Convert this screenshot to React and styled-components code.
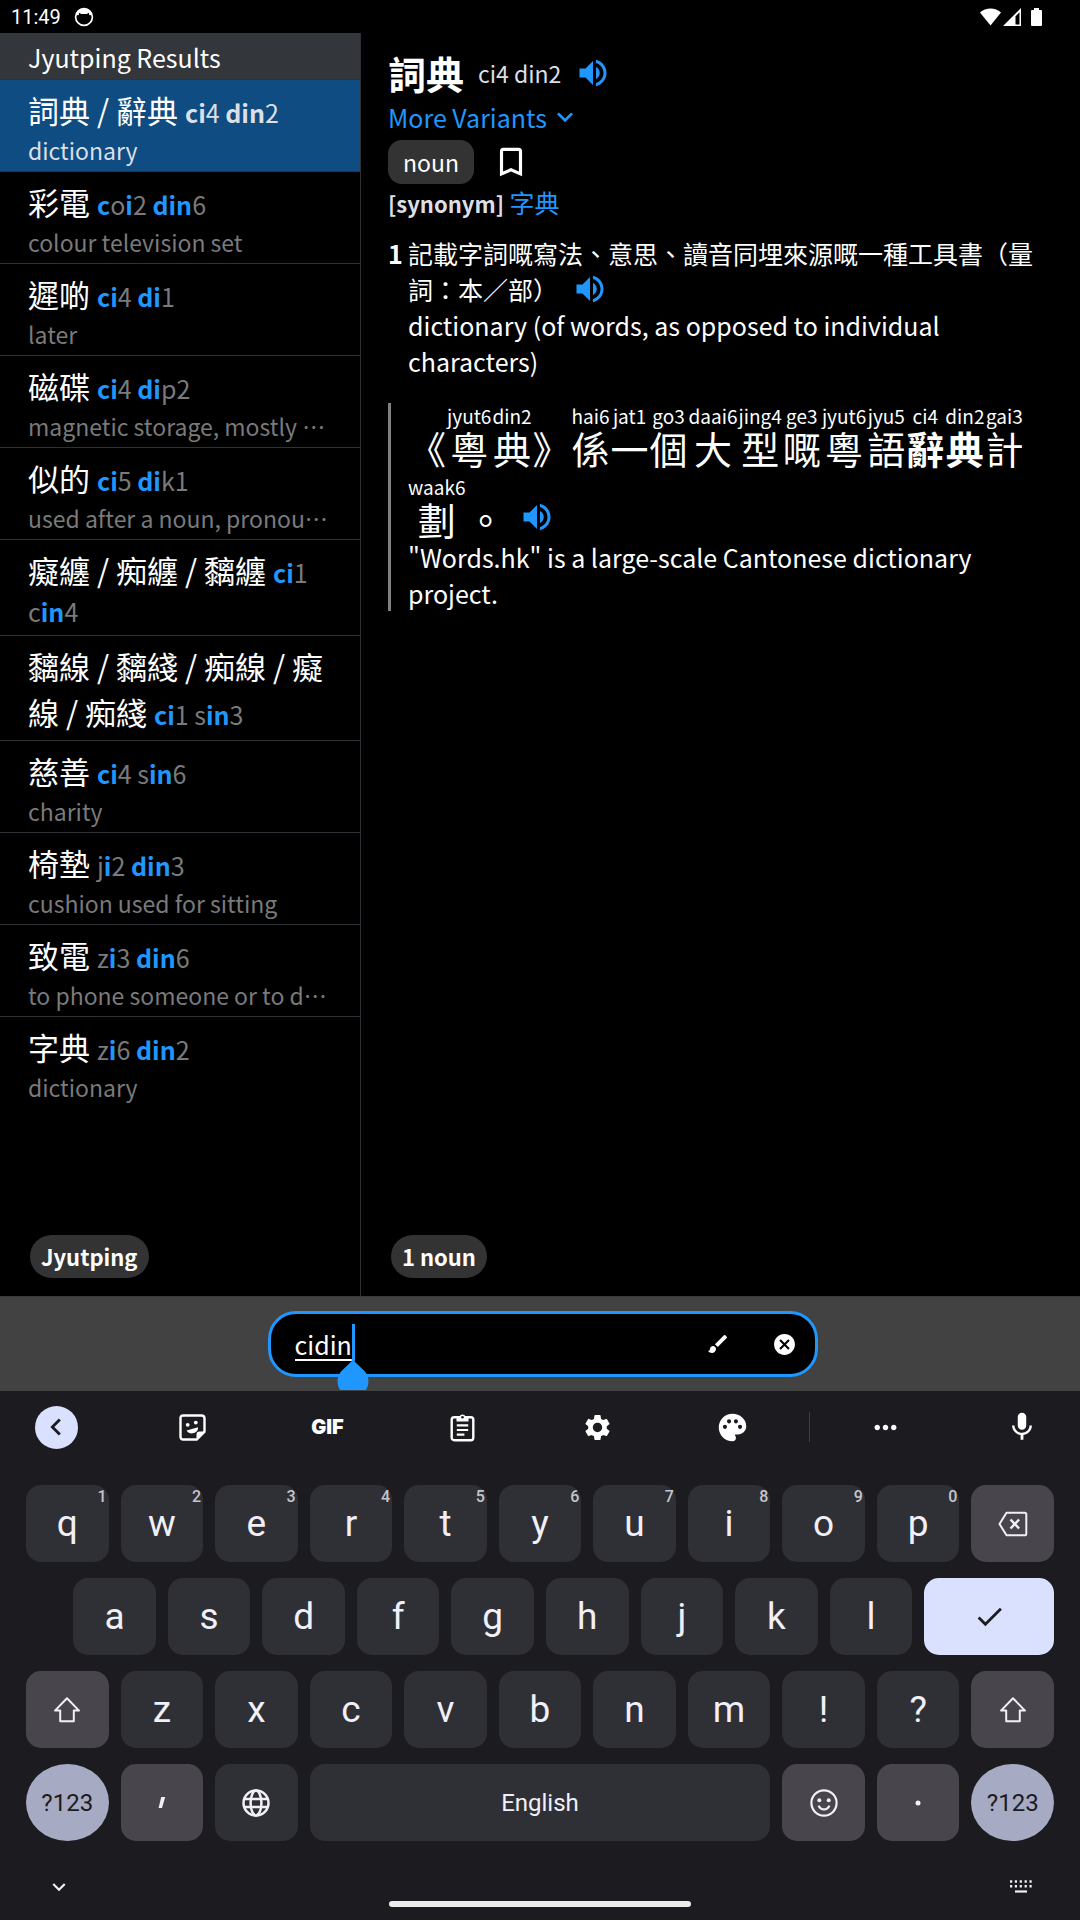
import React from "react";
import styled, { createGlobalStyle, css } from "styled-components";
import {
  MdVolumeUp,
  MdBookmarkBorder,
  MdBrush,
  MdCancel,
  MdSettings,
  MdPalette,
  MdMoreHoriz,
  MdMic,
  MdChevronLeft,
  MdExpandMore,
  MdCheck,
} from "react-icons/md";

const color = {
  accent: "#1f97ff",
  line: "#2f3237",
  muted: "#7a7a7a",
  soft: "#dcdfe5",
  chip: "#333333",
  board: "#1b1b20",
  key: "#2f3035",
  keyAlt: "#48464c",
  keySwitch: "#a6aac3",
  keyEnter: "#dae1ff",
  glyph: "#f1eff7",
};

const GlobalStyle = createGlobalStyle`
  *, *::before, *::after { box-sizing: border-box; }
  body {
    margin: 0;
    background: #000;
    color: #fff;
    font-family: "Noto Sans CJK TC", sans-serif;
    font-size: 25px;
    line-height: 36px;
  }
  button, input { font: inherit; color: inherit; margin: 0; padding: 0; border: 0; background: none; }
  button { cursor: pointer; }
  svg { display: block; flex: none; }
`;

const Screen = styled.div`
  min-height: 100vh;
  display: flex;
  flex-direction: column;
`;

/* ---------- status bar ---------- */

const StatusBar = styled.header`
  height: 33px;
  padding: 0 38px 0 11px;
  display: flex;
  align-items: center;
  justify-content: space-between;
  font-family: Roboto, sans-serif;
  font-size: 20px;
  line-height: 24px;
`;

const StatusGroup = styled.div`
  display: flex;
  align-items: center;
  gap: ${(p) => p.$gap}px;
`;

/* ---------- panes ---------- */

const Panes = styled.main`
  flex: 1;
  display: grid;
  grid-template-columns: minmax(0, 1fr) minmax(0, 2fr);
`;

const ResultsPane = styled.section`
  display: flex;
  flex-direction: column;
`;

const PaneHeading = styled.h2`
  margin: 0;
  padding: 7px 28px 4px;
  background: #33363b;
  border-bottom: 1px solid ${color.line};
  font-size: 25px;
  font-weight: 400;
  line-height: 35px;
`;

const ResultList = styled.ul`
  margin: 0;
  padding: 0;
  list-style: none;
`;

const ResultItem = styled.li`
  border-bottom: 1px solid ${color.line};
  &:last-child { border-bottom: 0; }
`;

const ResultButton = styled.button`
  display: block;
  width: 100%;
  padding: 7px 28px 5px;
  text-align: left;
  color: ${(p) => (p.$selected ? color.soft : color.muted)};
  background: ${(p) => (p.$selected ? "#0f4c81" : "transparent")};
  b {
    font-weight: 700;
    color: ${(p) => (p.$selected ? color.soft : color.accent)};
  }
`;

const ResultTitle = styled.span`
  display: block;
  font-size: 25px;
  line-height: 37px;
`;

const Hanzi = styled.span`
  color: #fff;
  font-size: 31px;
  line-height: 46px;
`;

const ResultGloss = styled.span`
  display: block;
  padding-top: 2px;
  font-size: 23px;
  line-height: 31px;
  white-space: nowrap;
  overflow: hidden;
  text-overflow: ellipsis;
`;

const PaneFooter = styled.footer`
  margin-top: auto;
  padding: 0 30px 18px;
  display: flex;
`;

const Pill = styled.button`
  height: 43px;
  padding: 0 11px;
  border-radius: 22px;
  background: ${color.chip};
  font-size: 22px;
  font-weight: 700;
  line-height: 33px;
`;

/* ---------- entry ---------- */

const EntryPane = styled.section`
  display: flex;
  flex-direction: column;
  border-left: 1px solid ${color.line};
`;

const Entry = styled.article`
  padding: 14px 27px 0;
`;

const EntryHead = styled.div`
  display: flex;
  align-items: center;
  height: 52px;
  gap: 14px;
`;

const Headword = styled.h1`
  margin: 0;
  font-size: 38px;
  font-weight: 700;
  line-height: 52px;
`;

const Reading = styled.span`
  color: ${color.soft};
  font-size: 23px;
  line-height: 33px;
`;

const SpeakButton = styled.button`
  display: inline-flex;
  vertical-align: top;
  color: ${color.accent};
  margin-left: ${(p) => (p.$inline ? "14px" : "0")};
`;

const VariantsButton = styled.button`
  display: flex;
  align-items: center;
  gap: 2px;
  color: ${color.accent};
`;

const TagRow = styled.div`
  display: flex;
  align-items: center;
  gap: 18px;
  margin-top: 5px;
`;

const Tag = styled.span`
  height: 44px;
  padding: 4px 15px;
  border-radius: 14px;
  background: ${color.chip};
  font-size: 23px;
`;

const IconButton = styled.button`
  display: flex;
  align-items: center;
  justify-content: center;
`;

const Synonyms = styled.p`
  margin: 0;
  color: ${color.soft};
  b { font-size: 22px; }
  a { color: ${color.accent}; text-decoration: none; }
`;

const Senses = styled.ol`
  margin: 14px 0 0;
  padding: 0;
  list-style: none;
`;

const Sense = styled.li`
  display: grid;
  grid-template-columns: 20px minmax(0, 1fr);
`;

const Paragraph = styled.p`
  margin: 0;
`;

const Example = styled.blockquote`
  margin: 24px 0 0;
  padding: 1px 0 0 17px;
  border-left: 3px solid #808080;
`;

const RubyLine = styled.div`
  display: flex;
  flex-wrap: wrap;
  gap: 7px 1px;
`;

const RubyCell = styled.span`
  display: grid;
  grid-template-rows: 24px 40px;
  justify-items: center;
  font-size: 38px;
  line-height: 40px;
  font-weight: ${(p) => (p.$strong ? 700 : 400)};
`;

const RubyText = styled.span`
  font-size: 19px;
  font-weight: 400;
  line-height: 24px;
`;

/* ---------- search ---------- */

const SearchBar = styled.form`
  display: flex;
  justify-content: center;
  padding: 14px 21px 14px 26px;
  background: #424242;
  border-top: 1px solid #383838;
`;

const SearchBox = styled.div`
  flex: 0 1 550px;
  height: 66px;
  padding: 0 18px 0 24px;
  display: flex;
  align-items: center;
  background: #000;
  border: 3px solid ${color.accent};
  border-radius: 28px;
`;

const SearchField = styled.label`
  position: relative;
  display: flex;
  margin-right: auto;
`;

const SearchInput = styled.input`
  field-sizing: content;
  outline: none;
  height: 36px;
  text-decoration: underline;
  text-decoration-thickness: 2px;
  text-underline-offset: 4px;
  text-decoration-skip-ink: none;
`;

const Caret = styled.span`
  position: absolute;
  left: 100%;
  top: -2px;
  width: 3px;
  height: 37px;
  background: ${color.accent};
`;

const CaretHandle = styled.span`
  position: absolute;
  left: calc(100% - 15px);
  top: 34px;
  width: 32px;
  height: 30px;
  overflow: hidden;
  color: ${color.accent};
`;

const SearchActions = styled.div`
  display: flex;
  gap: 42px;
`;

/* ---------- keyboard ---------- */

const Keyboard = styled.section`
  background: ${color.board};
  color: ${color.glyph};
  font-family: Roboto, sans-serif;
`;

const Toolbar = styled.div`
  display: grid;
  grid-template-columns: 125fr repeat(5, 135fr) 19fr 133fr 128fr;
  align-items: center;
  height: 72px;
  color: #fff;
`;

const ToolButton = styled.button`
  height: 44px;
  display: flex;
  align-items: center;
  justify-content: center;
  font-family: Inter, sans-serif;
  font-size: 20px;
  font-weight: 900;
  &:first-child { padding-right: 13px; }
  &:last-child { padding-left: 12px; }
`;

const BackDisc = styled.span`
  width: 43px;
  height: 43px;
  border-radius: 50%;
  display: grid;
  place-items: center;
  background: ${color.keyEnter};
  color: ${color.board};
`;

const ToolDivider = styled.span`
  justify-self: center;
  width: 1px;
  height: 30px;
  background: #3f3f44;
`;

const Keys = styled.div`
  display: grid;
  grid-template-columns: repeat(22, minmax(0, 1fr));
  grid-auto-rows: 77px;
  gap: 16px 12px;
  padding: 22px 26px 0;
`;

const keyTone = {
  plain: css`background: ${color.key};`,
  alt: css`background: ${color.keyAlt};`,
  enter: css`background: ${color.keyEnter}; color: ${color.board};`,
  mode: css`background: ${color.keySwitch}; color: ${color.board}; border-radius: 50%;`,
};

const Key = styled.button`
  position: relative;
  grid-column: ${(p) => (p.$start ? `${p.$start} / ` : "")}span ${(p) => p.$span || 2};
  display: flex;
  align-items: center;
  justify-content: center;
  border-radius: 15px;
  font-size: ${(p) => (p.$small ? 24 : 37)}px;
  line-height: 44px;
  ${(p) => keyTone[p.$tone || "plain"]}
`;

const KeyHint = styled.span`
  position: absolute;
  top: 3px;
  right: 2px;
  font-size: 16px;
  line-height: 18px;
  font-weight: 500;
  color: #c6c5cc;
`;

const NavBar = styled.nav`
  display: grid;
  grid-template-columns: 66px 1fr 66px;
  justify-items: center;
  align-items: center;
  height: 79px;
  padding: 12px 26px 0;
`;

const HomeHandle = styled.span`
  align-self: end;
  width: 302px;
  height: 6px;
  margin-bottom: 13px;
  border-radius: 3px;
  background: #ecece8;
`;

/* ---------- drawings ---------- */

const CatBadge = () => (
  <svg width="20" height="20" viewBox="0 0 20 20" aria-hidden="true">
    <circle cx="10" cy="10" r="8.4" fill="#000" stroke="#fff" strokeWidth="1.7" />
    <path d="M2 8C3 3.600 6 1.500 10 1.500S17 3.600 18 8L15.200 8.200 15 5.800 12.800 7H7.200L5 5.800 4.800 8.200Z" fill="#fff" />
  </svg>
);

const WifiIcon = () => (
  <svg width="21" height="18" viewBox="0 0 21 18" aria-hidden="true">
    <path d="M10.500 17.500 0 4.600C3 2 6.500.6 10.500.6S18 2 21 4.600Z" fill="#fff" />
  </svg>
);

const SignalIcon = () => (
  <svg width="18" height="18" viewBox="0 0 18 18" aria-hidden="true">
    <path d="M0 18 18 0v18ZM12.500 16.400h4V4.200l-4 4Z" fillRule="evenodd" fill="#fff" />
  </svg>
);

const BatteryIcon = () => (
  <svg width="11" height="18" viewBox="0 0 11 18" aria-hidden="true">
    <path d="M3 0h5v2h2q1 0 1 1v14q0 1-1 1H1q-1 0-1-1V3q0-1 1-1h2Z" fill="#fff" />
  </svg>
);

const StickerIcon = () => (
  <svg width="27" height="27" viewBox="0 0 27 27" aria-hidden="true">
    <path d="M4.500 1.500h18q3 0 3 3v13.200l-7.800 7.800H4.500q-3 0-3-3v-18q0-3 3-3Z" fill="none" stroke="currentColor" strokeWidth="2.400" />
    <path d="M17.500 25.500v-5q0-3 3-3h5Z" fill="currentColor" />
    <circle cx="8.700" cy="10.800" r="1.900" fill="currentColor" />
    <circle cx="16.800" cy="8.600" r="1.900" fill="currentColor" />
    <path d="M7.600 16.400 19 13.300c.3 3.200-1.900 5.500-5 6-2.800.4-5.300-.6-6.400-2.900Z" fill="currentColor" />
  </svg>
);

const ClipboardIcon = () => (
  <svg width="25" height="29" viewBox="0 0 25 29" aria-hidden="true">
    <rect x="1.700" y="4.200" width="21.600" height="23" rx="2.500" fill="none" stroke="currentColor" strokeWidth="2.400" />
    <path d="M6.500 3.500h3a3.200 3.200 0 0 1 6 0h3v5h-12Z" fill="currentColor" />
    <circle cx="12.500" cy="4.200" r="1.300" fill={color.board} />
    <path d="M6.800 12.400h11.400M6.800 17h11.400M6.800 21.600h7.600" stroke="currentColor" strokeWidth="2.200" />
  </svg>
);

const ShiftIcon = () => (
  <svg width="28" height="28" viewBox="0 0 28 28" aria-hidden="true">
    <path d="M14 2.300 26 14.600h-5.200v10.600H7.200V14.600H2Z" fill="none" stroke="currentColor" strokeWidth="2" strokeLinejoin="round" />
  </svg>
);

const BackspaceIcon = () => (
  <svg width="30" height="26" viewBox="0 0 30 26" aria-hidden="true">
    <path d="M8.500 1.700h18.200q1.600 0 1.600 1.600v19.400q0 1.600-1.600 1.600H8.500L1.500 13Z" fill="none" stroke="currentColor" strokeWidth="2" strokeLinejoin="round" />
    <path d="m12.500 8.500 8.600 9m0-9-8.600 9" stroke="currentColor" strokeWidth="2.400" />
  </svg>
);

const GlobeIcon = () => (
  <svg width="28" height="28" viewBox="0 0 28 28" aria-hidden="true">
    <g fill="none" stroke="currentColor" strokeWidth="2.500">
      <circle cx="14" cy="14" r="12.500" />
      <ellipse cx="14" cy="14" rx="5.400" ry="12.500" />
      <path d="M2.500 10h23M2.500 18h23" />
    </g>
  </svg>
);

const SmileIcon = () => (
  <svg width="28" height="28" viewBox="0 0 28 28" aria-hidden="true">
    <circle cx="14" cy="14" r="12.600" fill="none" stroke="currentColor" strokeWidth="2.200" />
    <circle cx="9.300" cy="11.300" r="2" fill="currentColor" />
    <circle cx="18.700" cy="11.300" r="2" fill="currentColor" />
    <path d="M8.600 16.600c1 2.500 3 3.800 5.400 3.800s4.400-1.300 5.400-3.800" fill="none" stroke="currentColor" strokeWidth="2.200" />
  </svg>
);

const CommaIcon = () => (
  <svg width="8" height="12" viewBox="0 0 8 12" aria-hidden="true">
    <path d="M3.200 0H7.200L4 11H.6Z" fill="currentColor" />
  </svg>
);

const DotIcon = () => (
  <svg width="6" height="6" viewBox="0 0 6 6" aria-hidden="true">
    <circle cx="3" cy="3" r="2.500" fill="currentColor" />
  </svg>
);

const KeyboardIcon = () => (
  <svg width="22" height="14" viewBox="0 0 22 14" aria-hidden="true">
    <path
      d="M0 1.500h2.200m2.600 0H7m2.700 0h2.200m2.700 0h2.200m2.700 0h2.200M0 6.300h2.200m2.600 0H7m2.700 0h2.200m2.700 0h2.200m2.700 0h2.200"
      stroke="currentColor"
      strokeWidth="2.400"
    />
    <path d="M5 11.500h12" stroke="currentColor" strokeWidth="2.200" />
  </svg>
);

/* ---------- data ---------- */

const results = [
  { hanzi: "詞典 / 辭典", reading: "*ci*4 *din*2", gloss: "dictionary", selected: true },
  { hanzi: "彩電", reading: "*c*o*i*2 *din*6", gloss: "colour television set" },
  { hanzi: "遲啲", reading: "*ci*4 *di*1", gloss: "later" },
  { hanzi: "磁碟", reading: "*ci*4 *di*p2", gloss: "magnetic storage, mostly used in computers" },
  { hanzi: "似的", reading: "*ci*5 *di*k1", gloss: "used after a noun, pronoun, or verb" },
  { hanzi: "癡纏 / 痴纏 / 黐纏", reading: "*ci*1 c*in*4" },
  { hanzi: "黐線 / 黐綫 / 痴線 / 癡線 / 痴綫", reading: "*ci*1 s*in*3" },
  { hanzi: "慈善", reading: "*ci*4 s*in*6", gloss: "charity" },
  { hanzi: "椅墊", reading: "j*i*2 *din*3", gloss: "cushion used for sitting" },
  { hanzi: "致電", reading: "z*i*3 *din*6", gloss: "to phone someone or to dial a number" },
  { hanzi: "字典", reading: "z*i*6 *din*2", gloss: "dictionary" },
];

const ruby = [
  ["《"], ["粵", "jyut6"], ["典", "din2"], ["》"], ["係", "hai6"], ["一", "jat1"], ["個", "go3"],
  ["大", "daai6"], ["型", "jing4"], ["嘅", "ge3"], ["粵", "jyut6"], ["語", "jyu5"],
  ["辭", "ci4", true], ["典", "din2", true], ["計", "gai3"], ["劃", "waak6"], ["。"],
];

const topRow = ["q", "w", "e", "r", "t", "y", "u", "i", "o", "p"];
const homeRow = ["a", "s", "d", "f", "g", "h", "j", "k", "l"];
const lowRow = ["z", "x", "c", "v", "b", "n", "m", "!", "?"];

const Matched = ({ text }) =>
  text.split("*").map((part, i) => (i % 2 ? <b key={i}>{part}</b> : part));

const Speaker = ({ label, inline }) => (
  <SpeakButton type="button" aria-label={label} $inline={inline}>
    <MdVolumeUp size={36} />
  </SpeakButton>
);

export default function App() {
  return (
    <Screen>
      <GlobalStyle />
      <StatusBar>
        <StatusGroup $gap={13}>
          <span>11:49</span>
          <CatBadge />
        </StatusGroup>
        <StatusGroup $gap={10}>
          <StatusGroup $gap={2}>
            <WifiIcon />
            <SignalIcon />
          </StatusGroup>
          <BatteryIcon />
        </StatusGroup>
      </StatusBar>

      <Panes lang="zh-Hant">
        <ResultsPane>
          <PaneHeading>Jyutping Results</PaneHeading>
          <ResultList>
            {results.map((r) => (
              <ResultItem key={r.hanzi}>
                <ResultButton type="button" $selected={r.selected}>
                  <ResultTitle>
                    <Hanzi>{r.hanzi} </Hanzi>
                    <Matched text={r.reading} />
                  </ResultTitle>
                  {r.gloss && <ResultGloss>{r.gloss}</ResultGloss>}
                </ResultButton>
              </ResultItem>
            ))}
          </ResultList>
          <PaneFooter>
            <Pill type="button">Jyutping</Pill>
          </PaneFooter>
        </ResultsPane>

        <EntryPane>
          <Entry>
            <EntryHead>
              <Headword>詞典</Headword>
              <Reading>ci4 din2</Reading>
              <Speaker label="Play pronunciation" />
            </EntryHead>
            <VariantsButton type="button">
              More Variants <MdExpandMore size={32} />
            </VariantsButton>
            <TagRow>
              <Tag>noun</Tag>
              <IconButton type="button" aria-label="Bookmark">
                <MdBookmarkBorder size={38} />
              </IconButton>
            </TagRow>
            <Synonyms>
              <b>[synonym]</b> <a href="#synonym">字典</a>
            </Synonyms>
            <Senses>
              <Sense>
                <b>1</b>
                <div>
                  <Paragraph>
                    記載字詞嘅寫法、意思、讀音同埋來源嘅一種工具書（量詞：本／部）
                    <Speaker inline label="Play definition" />
                  </Paragraph>
                  <Paragraph>dictionary (of words, as opposed to individual characters)</Paragraph>
                </div>
              </Sense>
            </Senses>
            <Example>
              <RubyLine>
                {ruby.map(([base, reading, strong], i) => (
                  <RubyCell key={i} $strong={strong}>
                    <RubyText>{reading}</RubyText>
                    {base}
                  </RubyCell>
                ))}
                <RubyCell>
                  <RubyText />
                  <Speaker inline label="Play example" />
                </RubyCell>
              </RubyLine>
              <Paragraph>"Words.hk" is a large-scale Cantonese dictionary project.</Paragraph>
            </Example>
          </Entry>
          <PaneFooter>
            <Pill type="button">1 noun</Pill>
          </PaneFooter>
        </EntryPane>
      </Panes>

      <SearchBar onSubmit={(e) => e.preventDefault()}>
        <SearchBox>
          <SearchField>
            <SearchInput type="text" aria-label="Search" defaultValue="cidin" />
            <Caret />
            <CaretHandle>
              <svg width="32" height="36" viewBox="0 0 32 36" aria-hidden="true">
                <path d="M16 0 27 10.500A15.500 15.500 0 1 1 5 10.500Z" fill="currentColor" />
              </svg>
            </CaretHandle>
          </SearchField>
          <SearchActions>
            <IconButton type="button" aria-label="Handwriting">
              <MdBrush size={24} />
            </IconButton>
            <IconButton type="button" aria-label="Clear">
              <MdCancel size={25} />
            </IconButton>
          </SearchActions>
        </SearchBox>
      </SearchBar>

      <Keyboard>
        <Toolbar>
          <ToolButton type="button" aria-label="Back">
            <BackDisc><MdChevronLeft size={34} /></BackDisc>
          </ToolButton>
          <ToolButton type="button" aria-label="Stickers"><StickerIcon /></ToolButton>
          <ToolButton type="button">GIF</ToolButton>
          <ToolButton type="button" aria-label="Clipboard"><ClipboardIcon /></ToolButton>
          <ToolButton type="button" aria-label="Settings"><MdSettings size={31} /></ToolButton>
          <ToolButton type="button" aria-label="Theme"><MdPalette size={33} /></ToolButton>
          <ToolDivider />
          <ToolButton type="button" aria-label="More"><MdMoreHoriz size={33} /></ToolButton>
          <ToolButton type="button" aria-label="Voice input"><MdMic size={34} /></ToolButton>
        </Toolbar>
        <Keys>
          {topRow.map((k, i) => (
            <Key type="button" key={k}>
              {k}
              <KeyHint>{(i + 1) % 10}</KeyHint>
            </Key>
          ))}
          <Key type="button" $tone="alt" aria-label="Backspace"><BackspaceIcon /></Key>

          {homeRow.map((k, i) => (
            <Key type="button" key={k} $start={i === 0 ? 2 : undefined}>{k}</Key>
          ))}
          <Key type="button" $tone="enter" $span={3} aria-label="Done"><MdCheck size={33} /></Key>

          <Key type="button" $tone="alt" aria-label="Shift"><ShiftIcon /></Key>
          {lowRow.map((k) => (
            <Key type="button" key={k}>{k}</Key>
          ))}
          <Key type="button" $tone="alt" aria-label="Shift"><ShiftIcon /></Key>

          <Key type="button" $tone="mode" $small>?123</Key>
          <Key type="button" $tone="alt" aria-label="Comma"><CommaIcon /></Key>
          <Key type="button" aria-label="Switch language"><GlobeIcon /></Key>
          <Key type="button" $span={10} $small>English</Key>
          <Key type="button" $tone="alt" aria-label="Emoji"><SmileIcon /></Key>
          <Key type="button" $tone="alt" aria-label="Period"><DotIcon /></Key>
          <Key type="button" $tone="mode" $small>?123</Key>
        </Keys>
        <NavBar>
          <IconButton type="button" aria-label="Hide keyboard"><MdExpandMore size={26} /></IconButton>
          <HomeHandle />
          <IconButton type="button" aria-label="Choose keyboard"><KeyboardIcon /></IconButton>
        </NavBar>
      </Keyboard>
    </Screen>
  );
}
